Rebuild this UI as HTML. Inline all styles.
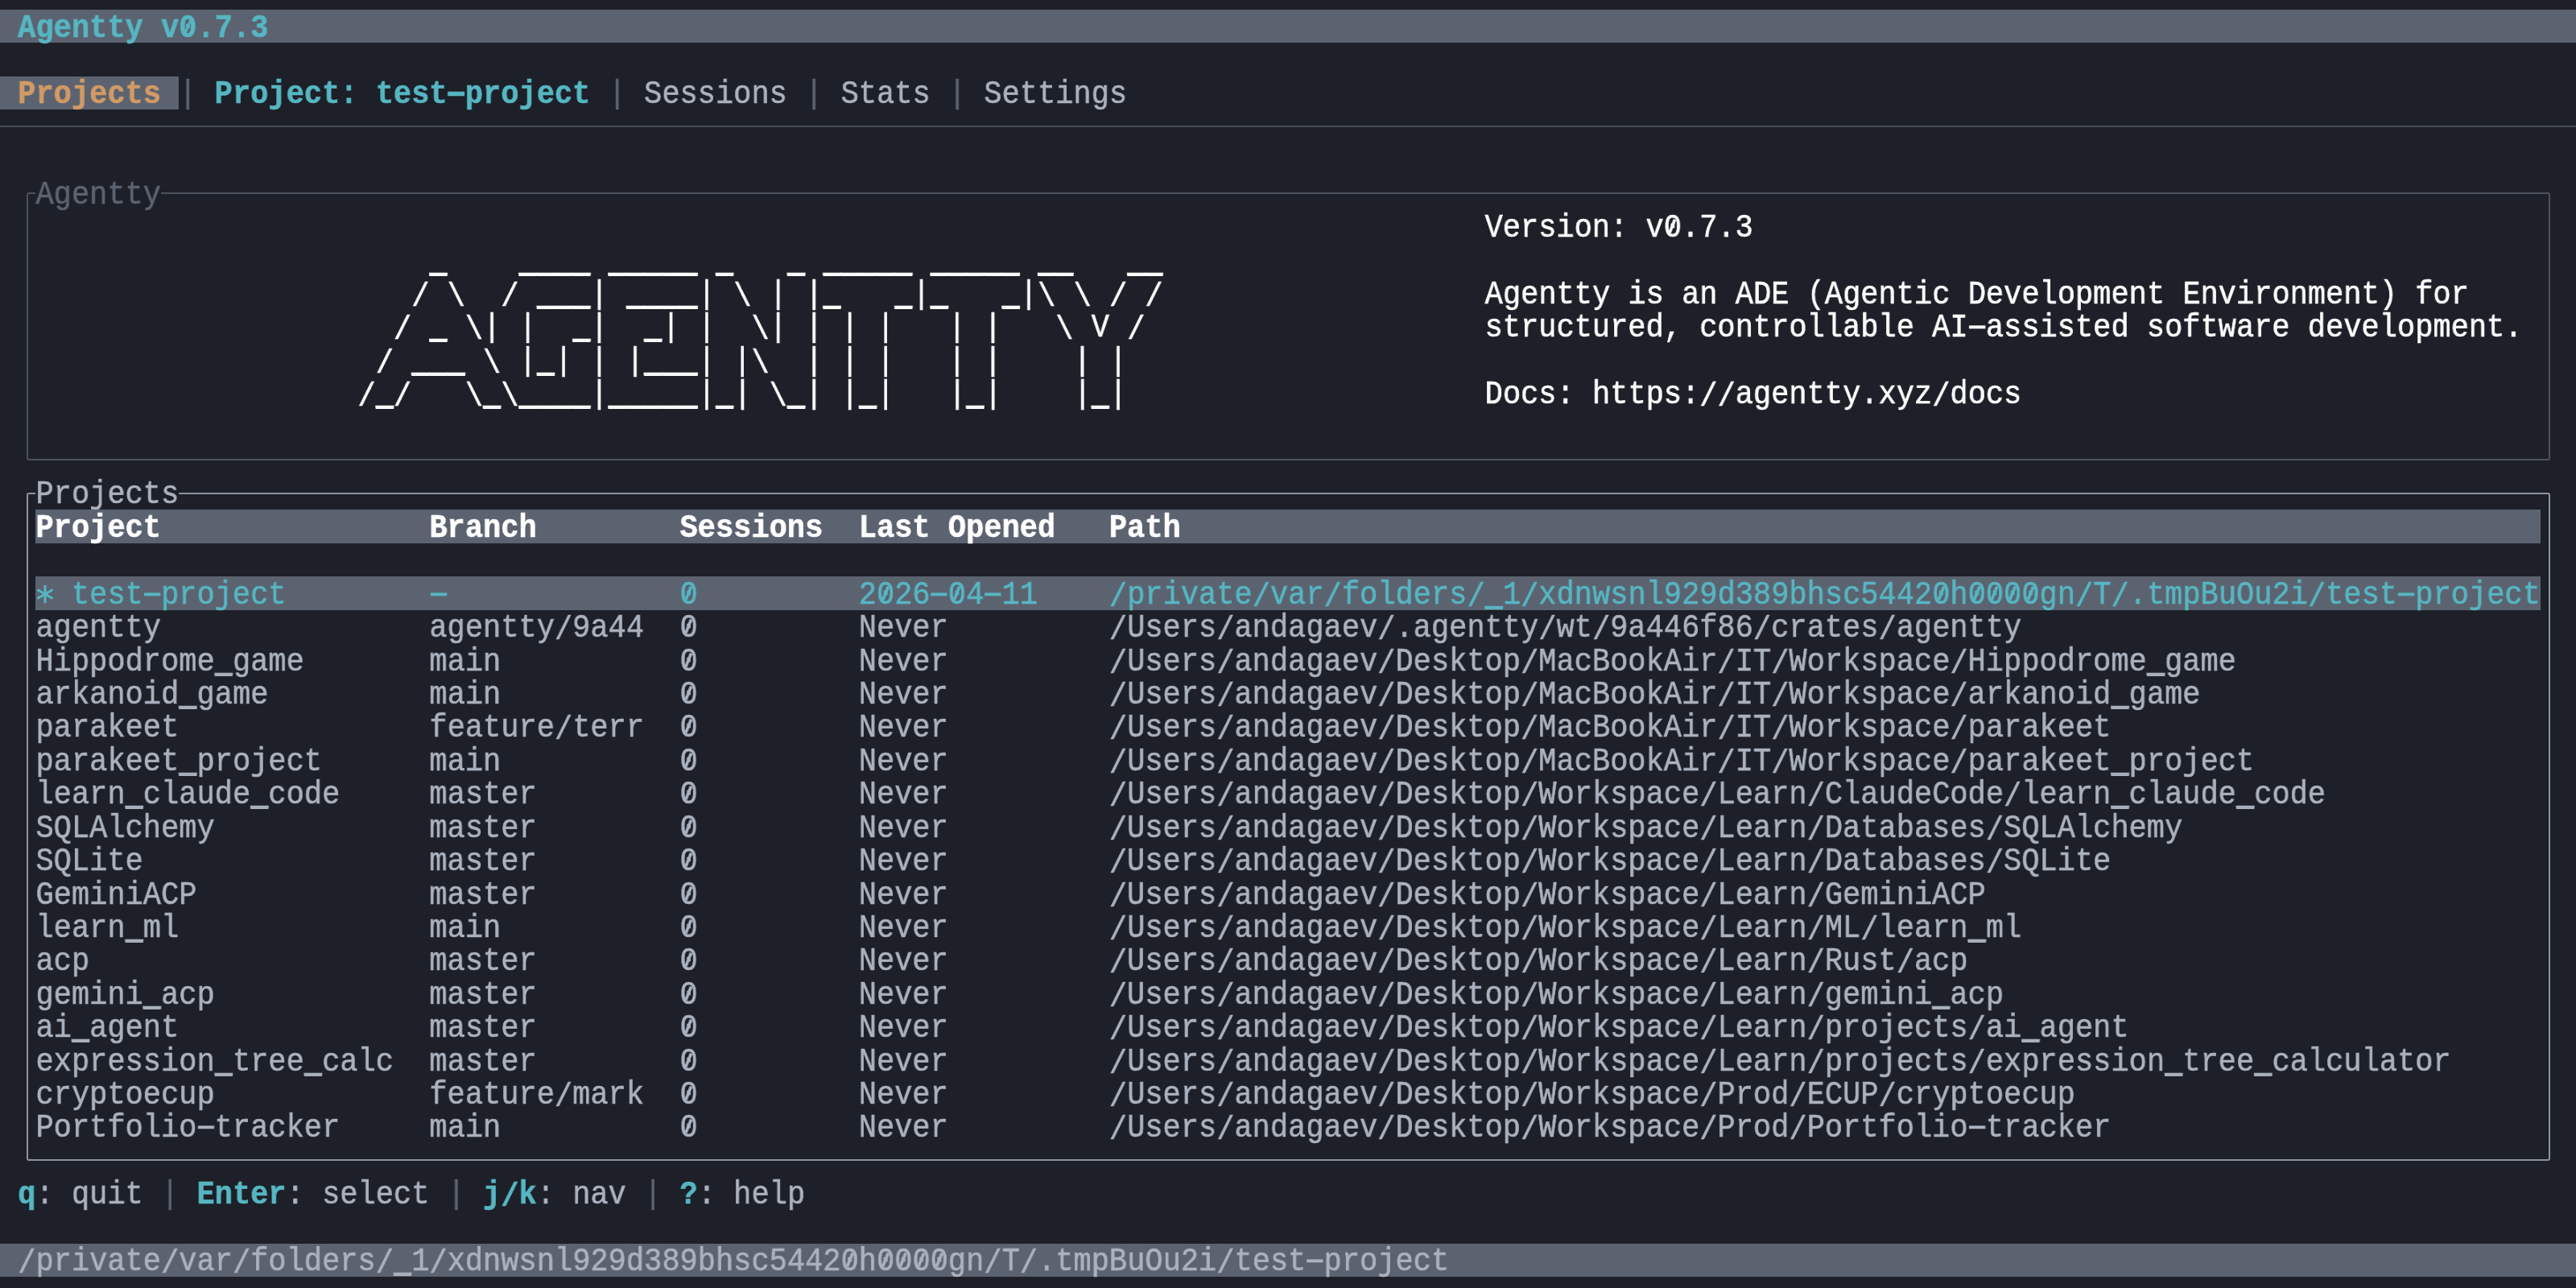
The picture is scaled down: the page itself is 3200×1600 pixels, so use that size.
<!DOCTYPE html>
<html><head><meta charset="utf-8"><title>Agentty</title>
<style>
html,body{margin:0;padding:0;}
body{width:3200px;height:1600px;background:#1d2028;position:relative;overflow:hidden;font-family:"Liberation Mono",monospace;}
.b{position:absolute;}
.t{position:absolute;left:0;height:41.421px;line-height:41.421px;font-size:41px;white-space:pre;transform:scaleX(0.90320);transform-origin:0 0;color:#abb2bf;will-change:transform;-webkit-text-stroke:0.6px currentColor;}
.k{font-weight:bold;}
.h{display:inline-block;transform:translateY(-1.4px) scaleX(1.9);}
.s{position:relative;top:3px;}
.u{position:relative;top:0.9px;text-shadow:0 1.6px currentColor;}
.z{position:relative;}
.k .z::after{width:3px;left:calc(50% - 1.5px);}
.z::after{content:'';position:absolute;left:calc(50% - 2.2px);top:11.8px;width:4.4px;height:17.6px;background:currentColor;transform:rotate(24deg);}
</style></head><body>
<div class="b" style="left:0.00px;top:12.00px;width:3200.00px;height:41.42px;background:#5c6370"></div>
<div class="t" style="top:14.60px"> <span class="k" style="color:#56b6c2">Agentty v<span class="z">0</span>.7.3</span></div>
<div class="b" style="left:0.00px;top:94.84px;width:222.22px;height:41.42px;background:#5c6370"></div>
<div class="t" style="top:97.44px"> <span class="k" style="color:#d19a66">Projects</span> <span style="color:#5c6370">|</span> <span class="k" style="color:#56b6c2">Project: test<span class="h">-</span>project</span> <span style="color:#5c6370">|</span> <span style="color:#abb2bf">Sessions</span> <span style="color:#5c6370">|</span> <span style="color:#abb2bf">Stats</span> <span style="color:#5c6370">|</span> <span style="color:#abb2bf">Settings</span></div>
<div class="b" style="left:0.00px;top:155.97px;width:3201.00px;height:2px;background:#474b56"></div>
<div class="b" style="left:32.98px;top:238.82px;width:3135.33px;height:333.37px;box-sizing:border-box;border:2.0px solid #4c515b;border-radius:3px"></div>
<div class="b" style="left:44.44px;top:236.82px;width:155.56px;height:6px;background:#1d2028"></div>
<div class="t" style="top:221.71px">  <span style="color:#5c6370">Agentty</span></div>
<div class="t" style="top:263.13px">                                                                                   <span style="color:#ffffff">Version: v<span class="z">0</span>.7.3</span></div>
<div class="t" style="top:304.55px">                    <span style="color:#ffffff">    <span class="u">_</span>    <span class="u">_</span><span class="u">_</span><span class="u">_</span><span class="u">_</span> <span class="u">_</span><span class="u">_</span><span class="u">_</span><span class="u">_</span><span class="u">_</span> <span class="u">_</span>   <span class="u">_</span> <span class="u">_</span><span class="u">_</span><span class="u">_</span><span class="u">_</span><span class="u">_</span> <span class="u">_</span><span class="u">_</span><span class="u">_</span><span class="u">_</span><span class="u">_</span> <span class="u">_</span><span class="u">_</span>   <span class="u">_</span><span class="u">_</span></span></div>
<div class="t" style="top:345.97px">                    <span style="color:#ffffff">   <span class="s">/</span> <span class="s">\</span>  <span class="s">/</span> <span class="u">_</span><span class="u">_</span><span class="u">_</span>| <span class="u">_</span><span class="u">_</span><span class="u">_</span><span class="u">_</span>| <span class="s">\</span> | |<span class="u">_</span>   <span class="u">_</span>|<span class="u">_</span>   <span class="u">_</span>|<span class="s">\</span> <span class="s">\</span> <span class="s">/</span> <span class="s">/</span></span>                  <span style="color:#ffffff">Agentty is an ADE (Agentic Development Environment) for</span></div>
<div class="t" style="top:387.39px">                    <span style="color:#ffffff">  <span class="s">/</span> <span class="u">_</span> <span class="s">\</span>| |  <span class="u">_</span>|  <span class="u">_</span>| |  <span class="s">\</span>| | | |   | |   <span class="s">\</span> V <span class="s">/</span> </span>                  <span style="color:#ffffff">structured, controllable AI<span class="h">-</span>assisted software development.</span></div>
<div class="t" style="top:428.81px">                    <span style="color:#ffffff"> <span class="s">/</span> <span class="u">_</span><span class="u">_</span><span class="u">_</span> <span class="s">\</span> |<span class="u">_</span>| | |<span class="u">_</span><span class="u">_</span><span class="u">_</span>| |<span class="s">\</span>  | | |   | |    | |  </span></div>
<div class="t" style="top:470.23px">                    <span style="color:#ffffff"><span class="s">/</span><span class="u">_</span><span class="s">/</span>   <span class="s">\</span><span class="u">_</span><span class="s">\</span><span class="u">_</span><span class="u">_</span><span class="u">_</span><span class="u">_</span>|<span class="u">_</span><span class="u">_</span><span class="u">_</span><span class="u">_</span><span class="u">_</span>|<span class="u">_</span>| <span class="s">\</span><span class="u">_</span>| |<span class="u">_</span>|   |<span class="u">_</span>|    |<span class="u">_</span>|  </span>                  <span style="color:#ffffff">Docs: https:<span class="s">/</span><span class="s">/</span>agentty.xyz<span class="s">/</span>docs</span></div>
<div class="b" style="left:32.98px;top:611.61px;width:3135.33px;height:830.42px;box-sizing:border-box;border:2.0px solid #8d939e;border-radius:3px"></div>
<div class="b" style="left:44.44px;top:609.61px;width:177.78px;height:6px;background:#1d2028"></div>
<div class="t" style="top:594.49px">  <span style="color:#abb2bf">Projects</span></div>
<div class="b" style="left:44.44px;top:633.32px;width:3111.11px;height:41.42px;background:#5c6370"></div>
<div class="t" style="top:635.92px">  <span class="k" style="color:#ffffff">Project</span>               <span class="k" style="color:#ffffff">Branch</span>        <span class="k" style="color:#ffffff">Sessions</span>  <span class="k" style="color:#ffffff">Last Opened</span>   <span class="k" style="color:#ffffff">Path</span></div>
<div class="b" style="left:44.44px;top:716.16px;width:3111.11px;height:41.42px;background:#5c6370"></div>
<svg class="b" style="left:43.56px;top:725.87px" width="24" height="24" viewBox="-12 -12 24 24"><g stroke="#56b6c2" stroke-width="3"><line x1="0" y1="-11" x2="0" y2="11"/><line x1="-9.5" y1="-5.5" x2="9.5" y2="5.5"/><line x1="-9.5" y1="5.5" x2="9.5" y2="-5.5"/></g></svg>
<div class="t" style="top:718.76px">  <span style="color:#56b6c2">  test<span class="h">-</span>project</span>        <span style="color:#56b6c2"><span class="h">-</span></span>             <span style="color:#56b6c2"><span class="z">0</span></span>         <span style="color:#56b6c2">2<span class="z">0</span>26<span class="h">-</span><span class="z">0</span>4<span class="h">-</span>11</span>    <span style="color:#56b6c2"><span class="s">/</span>private<span class="s">/</span>var<span class="s">/</span>folders<span class="s">/</span><span class="u">_</span>1<span class="s">/</span>xdnwsnl929d389bhsc5442<span class="z">0</span>h<span class="z">0</span><span class="z">0</span><span class="z">0</span><span class="z">0</span>gn<span class="s">/</span>T<span class="s">/</span>.tmpBuOu2i<span class="s">/</span>test<span class="h">-</span>project</span></div>
<div class="t" style="top:760.18px">  <span style="color:#abb2bf">agentty</span>               <span style="color:#abb2bf">agentty<span class="s">/</span>9a44</span>  <span style="color:#abb2bf"><span class="z">0</span></span>         <span style="color:#abb2bf">Never</span>         <span style="color:#abb2bf"><span class="s">/</span>Users<span class="s">/</span>andagaev<span class="s">/</span>.agentty<span class="s">/</span>wt<span class="s">/</span>9a446f86<span class="s">/</span>crates<span class="s">/</span>agentty</span></div>
<div class="t" style="top:801.60px">  <span style="color:#abb2bf">Hippodrome<span class="u">_</span>game</span>       <span style="color:#abb2bf">main</span>          <span style="color:#abb2bf"><span class="z">0</span></span>         <span style="color:#abb2bf">Never</span>         <span style="color:#abb2bf"><span class="s">/</span>Users<span class="s">/</span>andagaev<span class="s">/</span>Desktop<span class="s">/</span>MacBookAir<span class="s">/</span>IT<span class="s">/</span>Workspace<span class="s">/</span>Hippodrome<span class="u">_</span>game</span></div>
<div class="t" style="top:843.02px">  <span style="color:#abb2bf">arkanoid<span class="u">_</span>game</span>         <span style="color:#abb2bf">main</span>          <span style="color:#abb2bf"><span class="z">0</span></span>         <span style="color:#abb2bf">Never</span>         <span style="color:#abb2bf"><span class="s">/</span>Users<span class="s">/</span>andagaev<span class="s">/</span>Desktop<span class="s">/</span>MacBookAir<span class="s">/</span>IT<span class="s">/</span>Workspace<span class="s">/</span>arkanoid<span class="u">_</span>game</span></div>
<div class="t" style="top:884.44px">  <span style="color:#abb2bf">parakeet</span>              <span style="color:#abb2bf">feature<span class="s">/</span>terr</span>  <span style="color:#abb2bf"><span class="z">0</span></span>         <span style="color:#abb2bf">Never</span>         <span style="color:#abb2bf"><span class="s">/</span>Users<span class="s">/</span>andagaev<span class="s">/</span>Desktop<span class="s">/</span>MacBookAir<span class="s">/</span>IT<span class="s">/</span>Workspace<span class="s">/</span>parakeet</span></div>
<div class="t" style="top:925.86px">  <span style="color:#abb2bf">parakeet<span class="u">_</span>project</span>      <span style="color:#abb2bf">main</span>          <span style="color:#abb2bf"><span class="z">0</span></span>         <span style="color:#abb2bf">Never</span>         <span style="color:#abb2bf"><span class="s">/</span>Users<span class="s">/</span>andagaev<span class="s">/</span>Desktop<span class="s">/</span>MacBookAir<span class="s">/</span>IT<span class="s">/</span>Workspace<span class="s">/</span>parakeet<span class="u">_</span>project</span></div>
<div class="t" style="top:967.28px">  <span style="color:#abb2bf">learn<span class="u">_</span>claude<span class="u">_</span>code</span>     <span style="color:#abb2bf">master</span>        <span style="color:#abb2bf"><span class="z">0</span></span>         <span style="color:#abb2bf">Never</span>         <span style="color:#abb2bf"><span class="s">/</span>Users<span class="s">/</span>andagaev<span class="s">/</span>Desktop<span class="s">/</span>Workspace<span class="s">/</span>Learn<span class="s">/</span>ClaudeCode<span class="s">/</span>learn<span class="u">_</span>claude<span class="u">_</span>code</span></div>
<div class="t" style="top:1008.71px">  <span style="color:#abb2bf">SQLAlchemy</span>            <span style="color:#abb2bf">master</span>        <span style="color:#abb2bf"><span class="z">0</span></span>         <span style="color:#abb2bf">Never</span>         <span style="color:#abb2bf"><span class="s">/</span>Users<span class="s">/</span>andagaev<span class="s">/</span>Desktop<span class="s">/</span>Workspace<span class="s">/</span>Learn<span class="s">/</span>Databases<span class="s">/</span>SQLAlchemy</span></div>
<div class="t" style="top:1050.13px">  <span style="color:#abb2bf">SQLite</span>                <span style="color:#abb2bf">master</span>        <span style="color:#abb2bf"><span class="z">0</span></span>         <span style="color:#abb2bf">Never</span>         <span style="color:#abb2bf"><span class="s">/</span>Users<span class="s">/</span>andagaev<span class="s">/</span>Desktop<span class="s">/</span>Workspace<span class="s">/</span>Learn<span class="s">/</span>Databases<span class="s">/</span>SQLite</span></div>
<div class="t" style="top:1091.55px">  <span style="color:#abb2bf">GeminiACP</span>             <span style="color:#abb2bf">master</span>        <span style="color:#abb2bf"><span class="z">0</span></span>         <span style="color:#abb2bf">Never</span>         <span style="color:#abb2bf"><span class="s">/</span>Users<span class="s">/</span>andagaev<span class="s">/</span>Desktop<span class="s">/</span>Workspace<span class="s">/</span>Learn<span class="s">/</span>GeminiACP</span></div>
<div class="t" style="top:1132.97px">  <span style="color:#abb2bf">learn<span class="u">_</span>ml</span>              <span style="color:#abb2bf">main</span>          <span style="color:#abb2bf"><span class="z">0</span></span>         <span style="color:#abb2bf">Never</span>         <span style="color:#abb2bf"><span class="s">/</span>Users<span class="s">/</span>andagaev<span class="s">/</span>Desktop<span class="s">/</span>Workspace<span class="s">/</span>Learn<span class="s">/</span>ML<span class="s">/</span>learn<span class="u">_</span>ml</span></div>
<div class="t" style="top:1174.39px">  <span style="color:#abb2bf">acp</span>                   <span style="color:#abb2bf">master</span>        <span style="color:#abb2bf"><span class="z">0</span></span>         <span style="color:#abb2bf">Never</span>         <span style="color:#abb2bf"><span class="s">/</span>Users<span class="s">/</span>andagaev<span class="s">/</span>Desktop<span class="s">/</span>Workspace<span class="s">/</span>Learn<span class="s">/</span>Rust<span class="s">/</span>acp</span></div>
<div class="t" style="top:1215.81px">  <span style="color:#abb2bf">gemini<span class="u">_</span>acp</span>            <span style="color:#abb2bf">master</span>        <span style="color:#abb2bf"><span class="z">0</span></span>         <span style="color:#abb2bf">Never</span>         <span style="color:#abb2bf"><span class="s">/</span>Users<span class="s">/</span>andagaev<span class="s">/</span>Desktop<span class="s">/</span>Workspace<span class="s">/</span>Learn<span class="s">/</span>gemini<span class="u">_</span>acp</span></div>
<div class="t" style="top:1257.23px">  <span style="color:#abb2bf">ai<span class="u">_</span>agent</span>              <span style="color:#abb2bf">master</span>        <span style="color:#abb2bf"><span class="z">0</span></span>         <span style="color:#abb2bf">Never</span>         <span style="color:#abb2bf"><span class="s">/</span>Users<span class="s">/</span>andagaev<span class="s">/</span>Desktop<span class="s">/</span>Workspace<span class="s">/</span>Learn<span class="s">/</span>projects<span class="s">/</span>ai<span class="u">_</span>agent</span></div>
<div class="t" style="top:1298.65px">  <span style="color:#abb2bf">expression<span class="u">_</span>tree<span class="u">_</span>calc</span>  <span style="color:#abb2bf">master</span>        <span style="color:#abb2bf"><span class="z">0</span></span>         <span style="color:#abb2bf">Never</span>         <span style="color:#abb2bf"><span class="s">/</span>Users<span class="s">/</span>andagaev<span class="s">/</span>Desktop<span class="s">/</span>Workspace<span class="s">/</span>Learn<span class="s">/</span>projects<span class="s">/</span>expression<span class="u">_</span>tree<span class="u">_</span>calculator</span></div>
<div class="t" style="top:1340.07px">  <span style="color:#abb2bf">cryptoecup</span>            <span style="color:#abb2bf">feature<span class="s">/</span>mark</span>  <span style="color:#abb2bf"><span class="z">0</span></span>         <span style="color:#abb2bf">Never</span>         <span style="color:#abb2bf"><span class="s">/</span>Users<span class="s">/</span>andagaev<span class="s">/</span>Desktop<span class="s">/</span>Workspace<span class="s">/</span>Prod<span class="s">/</span>ECUP<span class="s">/</span>cryptoecup</span></div>
<div class="t" style="top:1381.49px">  <span style="color:#abb2bf">Portfolio<span class="h">-</span>tracker</span>     <span style="color:#abb2bf">main</span>          <span style="color:#abb2bf"><span class="z">0</span></span>         <span style="color:#abb2bf">Never</span>         <span style="color:#abb2bf"><span class="s">/</span>Users<span class="s">/</span>andagaev<span class="s">/</span>Desktop<span class="s">/</span>Workspace<span class="s">/</span>Prod<span class="s">/</span>Portfolio<span class="h">-</span>tracker</span></div>
<div class="t" style="top:1464.34px"> <span class="k" style="color:#56b6c2">q</span><span style="color:#abb2bf">: quit </span><span style="color:#5c6370">|</span> <span class="k" style="color:#56b6c2">Enter</span><span style="color:#abb2bf">: select </span><span style="color:#5c6370">|</span> <span class="k" style="color:#56b6c2">j<span class="s">/</span>k</span><span style="color:#abb2bf">: nav </span><span style="color:#5c6370">|</span> <span class="k" style="color:#56b6c2">?</span><span style="color:#abb2bf">: help</span></div>
<div class="b" style="left:0.00px;top:1544.58px;width:3200.00px;height:41.42px;background:#5c6370"></div>
<div class="t" style="top:1547.18px"> <span style="color:#abb2bf"><span class="s">/</span>private<span class="s">/</span>var<span class="s">/</span>folders<span class="s">/</span><span class="u">_</span>1<span class="s">/</span>xdnwsnl929d389bhsc5442<span class="z">0</span>h<span class="z">0</span><span class="z">0</span><span class="z">0</span><span class="z">0</span>gn<span class="s">/</span>T<span class="s">/</span>.tmpBuOu2i<span class="s">/</span>test<span class="h">-</span>project</span></div>
</body></html>
